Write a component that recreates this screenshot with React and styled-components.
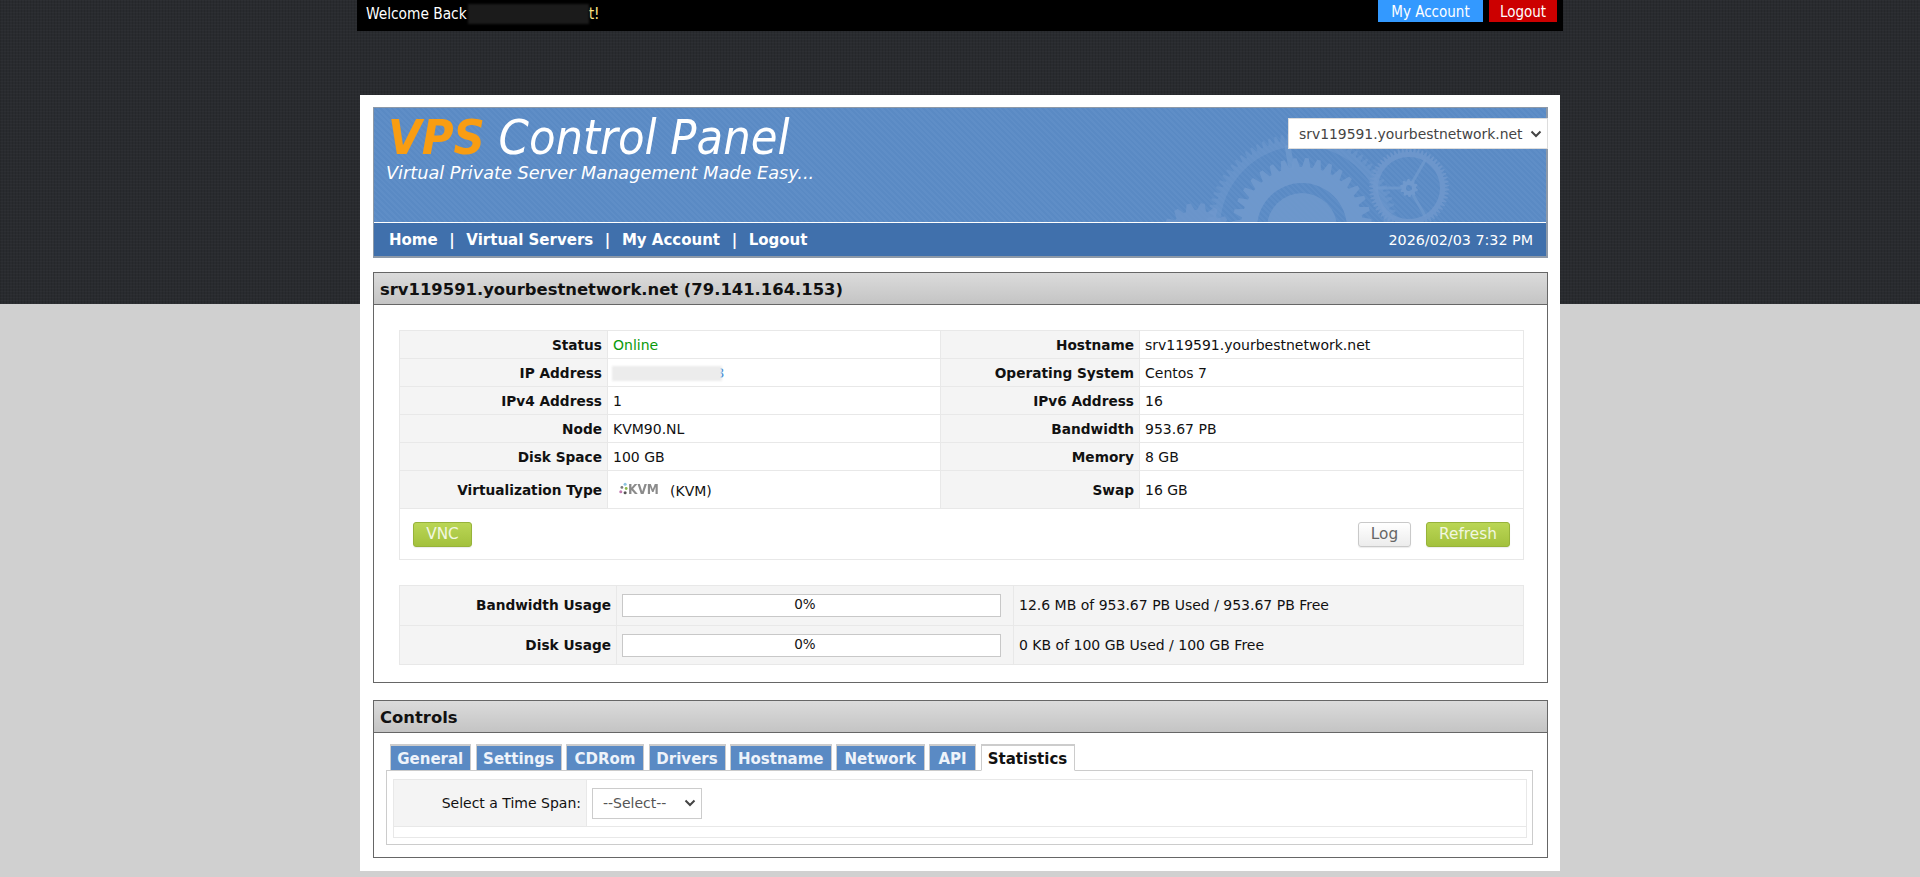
import React from 'react'
import styled, { createGlobalStyle } from 'styled-components'

const FONT = '"DejaVu Sans", "Noto Sans", sans-serif'
const NARROW = '"DejaVu Sans Condensed", "DejaVu Sans", sans-serif'

const chevron = `url("data:image/svg+xml,%3Csvg xmlns='http://www.w3.org/2000/svg' width='12' height='8' viewBox='0 0 12 8'%3E%3Cpath d='M1.5 1.5 6 6l4.5-4.5' fill='none' stroke='%23444' stroke-width='2'/%3E%3C/svg%3E")`

const GlobalStyle = createGlobalStyle`
  html, body { margin: 0; padding: 0; }
  body {
    min-height: 877px;
    overflow: hidden;
    font-family: ${FONT};
    font-size: 14px;
    color: #111;
    background:
      repeating-linear-gradient(0deg, rgba(255,255,255,.018) 0 1px, transparent 1px 3px) 0 0 / 100% 304px no-repeat,
      repeating-linear-gradient(90deg, rgba(0,0,0,.10) 0 1px, transparent 1px 3px) 0 0 / 100% 304px no-repeat,
      linear-gradient(#292b2f, #292b2f) 0 0 / 100% 304px no-repeat,
      #d0d0d0;
  }
`

const Page = styled.div`
  width: 1206px;
  margin: 0 auto;
`

const TopBar = styled.div`
  height: 31px;
  background: #000;
  display: flex;
  justify-content: space-between;
  padding: 0 6px 0 9px;
  box-sizing: border-box;
`

const Welcome = styled.div`
  color: #fff;
  font-family: ${NARROW};
  font-size: 15.3px;
  display: flex;
  align-items: center;
  height: 27px;
  white-space: pre;
  span { color: #ffe98a; }
`

const NameBlur = styled.i`
  display: inline-block;
  width: 121px;
  height: 20px;
  margin-left: 1px;
  background: #1b1b1b;
  filter: blur(1px);
`

const TopButtons = styled.div`
  display: flex;
  gap: 6px;
`

const TopButton = styled.a`
  height: 22px;
  line-height: 24px;
  width: ${p => p.$w}px;
  text-align: center;
  color: #fff;
  font-family: ${NARROW};
  font-size: 15px;
  background: ${p => p.$bg};
`

const Sheet = styled.div`
  width: 1200px;
  height: 776px;
  margin: 64px auto 0;
  padding: 12px 12px 0 13px;
  box-sizing: border-box;
  background: #fff;
`

const Banner = styled.div`
  position: relative;
  height: 151px;
  box-sizing: border-box;
  border: 2px solid #8d99a8;
  border-width: 1px 2px 2px 1px;
  display: flex;
  flex-direction: column;
  background:
    repeating-linear-gradient(45deg, #5a8ac4 0 2px, #5f8ec7 2px 4px);
`

const Hero = styled.div`
  position: relative;
  height: 115px;
  box-sizing: border-box;
  padding: 0 0 0 12px;
  border-bottom: 1px solid #fff;
  overflow: hidden;
`

const Gears = styled.svg`
  position: absolute;
  left: 0;
  top: 0;
  width: 100%;
  height: 100%;
`

const Logo = styled.div`
  position: relative;
  font-style: italic;
  font-size: 48.3px;
  line-height: 52px;
  margin: 3px 0 0 2px;
  color: #fff;
  font-family: ${NARROW};
  b { color: #f99d12; font-weight: 700; }
`

const Tagline = styled.div`
  position: relative;
  color: #fff;
  font-style: italic;
  font-size: 17.7px;
  line-height: 24px;
  margin-top: -2px;
`

const ServerSelect = styled.select`
  position: absolute;
  right: -2px;
  top: 10px;
  width: 260px;
  height: 31px;
  padding-left: 10px;
  appearance: none;
  background: #fff ${chevron} no-repeat right 5px center;
  border: 1px solid #ddd;
  border-radius: 0;
  color: #444;
  font-family: ${FONT};
  font-size: 13.9px;
`

const NavBar = styled.div`
  flex: 1;
  display: flex;
  align-items: center;
  justify-content: space-between;
  padding: 0 13px 0 15px;
  background: #4070ac;
  color: #fff;
`

const NavLinks = styled.nav`
  display: flex;
  font-weight: 700;
  font-size: 15px;
`

const NavSep = styled.span`
  margin: 0 11.6px;
`

const Clock = styled.div`
  font-size: 14.3px;
`

const Panel = styled.section`
  margin-top: ${p => p.$top}px;
  border: 1px solid #666;
`

const PanelTitle = styled.h2`
  margin: 0;
  height: 32px;
  box-sizing: border-box;
  padding-left: 6px;
  font-size: 16.4px;
  line-height: 33px;
  font-weight: 700;
  color: #111;
  border-bottom: 1px solid #666;
  background: linear-gradient(#dbdbdb, #c4c4c4);
`

const PanelBody = styled.div`
  padding: ${p => p.$pad};
`

const Grid = styled.table`
  width: ${p => p.$w}px;
  margin-top: ${p => p.$top || 0}px;
  table-layout: fixed;
  border-collapse: collapse;
  td {
    border: 1px solid #e8e8e8;
    padding: 0;
    height: ${p => p.$row - 1}px;
  }
`

const Label = styled.td`
  background: #f4f4f4;
  text-align: right;
  font-size: ${p => (p.$plain ? 14 : 13.7)}px;
  font-weight: ${p => (p.$plain ? 400 : 700)};
  padding-right: 5px !important;
`

const TallLabel = styled(Label)`
  height: 37px !important;
`

const Value = styled.td`
  padding-left: 5px !important;
  color: ${p => p.$color || '#111'};
  background: ${p => p.$bg || '#fff'};
`

const Gap = styled.td`
  height: ${p => p.$h}px !important;
`

const IpLink = styled.span`
  position: relative;
  display: inline-block;
  color: #0b5cc4;
`

const IpBlur = styled.i`
  position: absolute;
  left: -1px;
  top: 1px;
  width: calc(100% - 1px);
  height: 15px;
  background: #ececec;
  filter: blur(1px);
`

const KvmLogo = styled.span`
  display: inline-flex;
  align-items: center;
  margin-left: 5px;
  margin-right: 6px;
  width: 46px;
  color: #8b8b8b;
  font-family: ${NARROW};
  font-weight: 700;
  font-size: 13.5px;
  filter: blur(.4px);
  svg { margin-right: -1px; }
`

const Actions = styled.div`
  display: flex;
  align-items: center;
  padding: 0 13px;
  gap: 15px;
`

const Spacer = styled.div`
  flex: 1;
`

const Btn = styled.button`
  width: ${p => p.$w}px;
  height: 25px;
  padding: 0;
  border-radius: 3px;
  font-family: ${FONT};
  font-size: 15.3px;
  border: 1px solid ${p => (p.$light ? '#c9c9c9' : '#97b33a')};
  color: ${p => (p.$light ? '#666' : '#f2f7e0')};
  background: ${p => (p.$light ? 'linear-gradient(#fff, #ececec)' : 'linear-gradient(#bad655, #a3c13d)')};
  box-shadow: 0 1px 1px rgba(0,0,0,.08);
`

const Bar = styled.div`
  width: 379px;
  height: 23px;
  box-sizing: border-box;
  padding-right: 13px;
  border: 1px solid #c8c8c8;
  background: #fff;
  text-align: center;
  font-size: 13.5px;
  line-height: 19px;
  margin-top: 1px;
`

const Tabs = styled.div`
  display: flex;
  gap: 4.5px;
  padding-left: 3.5px;
  position: relative;
  z-index: 1;
  margin-bottom: -1px;
`

const Tab = styled.div`
  width: ${p => p.$w}px;
  box-sizing: border-box;
  text-align: center;
  font-weight: 700;
  font-size: 15px;
  line-height: 27px;
  border: 1px solid #ccc;
  border-top-width: 2px;
  border-bottom: ${p => (p.$active ? '1px solid #fff' : '0')};
  color: ${p => (p.$active ? '#111' : '#eef3fa')};
  background: ${p => (p.$active ? '#fff' : '#5a8ac4')};
  height: ${p => (p.$active ? 27 : 26)}px;
`

const TabPanel = styled.div`
  border: 1px solid #ccc;
  padding: 8px 6px 6px 6px;
`

const TimeSelect = styled.select`
  width: 110px;
  height: 31px;
  padding-left: 10px;
  display: block;
  appearance: none;
  background: #fff ${chevron} no-repeat right 5px center;
  border: 1px solid #ccc;
  border-radius: 0;
  color: #555;
  font-family: ${FONT};
  font-size: 14px;
`

const toothPath = (cx, cy, r, depth, teeth) => {
  const pts = []
  const step = (Math.PI * 2) / teeth
  for (let i = 0; i < teeth; i++) {
    const a = i * step
    const rows = [[0, r - depth], [0.25, r], [0.55, r], [0.8, r - depth]]
    rows.forEach(([f, rad]) => {
      const t = a + f * step
      pts.push(`${(cx + Math.cos(t) * rad).toFixed(1)} ${(cy + Math.sin(t) * rad).toFixed(1)}`)
    })
  }
  return `M${pts.join('L')}Z`
}

const ring = (cx, cy, r) =>
  `M${cx - r} ${cy}a${r} ${r} 0 1 0 ${r * 2} 0a${r} ${r} 0 1 0 ${-r * 2} 0Z`

const GEAR = '#7099cd'

const Spoke = ({ cx, cy, from, to, deg, width }) => {
  const t = (deg * Math.PI) / 180
  return (
    <line
      x1={cx + Math.cos(t) * from}
      y1={cy + Math.sin(t) * from}
      x2={cx + Math.cos(t) * to}
      y2={cy + Math.sin(t) * to}
      stroke={GEAR}
      strokeOpacity=".75"
      strokeWidth={width}
    />
  )
}

// gears are placed relative to the banner's top left corner (374,108)
function GearArt() {
  return (
    <Gears viewBox="0 0 1172 114" preserveAspectRatio="none">
      <path d={toothPath(928, 120, 95, 6, 90) + ring(928, 120, 82)} fill={GEAR} fillOpacity=".55" fillRule="evenodd" />
      <Spoke cx={928} cy={120} from={60} to={84} deg={-100} width={6} />
      <path d={toothPath(928, 120, 70, 9, 36) + ring(928, 120, 45)} fill={GEAR} fillOpacity=".9" fillRule="evenodd" />
      <path d={ring(928, 120, 35)} fill={GEAR} fillOpacity=".85" />
      <path d={toothPath(823, 131, 36, 7, 16) + ring(823, 131, 12)} fill={GEAR} fillOpacity=".7" fillRule="evenodd" />
      <path d={toothPath(1035, 80, 40, 4, 60) + ring(1035, 80, 31)} fill={GEAR} fillOpacity=".8" fillRule="evenodd" />
      <Spoke cx={1035} cy={80} from={3} to={33} deg={-60} width={3} />
      <Spoke cx={1035} cy={80} from={3} to={33} deg={60} width={3} />
      <Spoke cx={1035} cy={80} from={3} to={33} deg={180} width={3} />
      <path d={toothPath(1035, 80, 9, 2, 10) + ring(1035, 80, 3)} fill={GEAR} fillRule="evenodd" />
    </Gears>
  )
}

const infoRows = [
  ['Status', 'Online', 'Hostname', 'srv119591.yourbestnetwork.net'],
  ['IP Address', null, 'Operating System', 'Centos 7'],
  ['IPv4 Address', '1', 'IPv6 Address', '16'],
  ['Node', 'KVM90.NL', 'Bandwidth', '953.67 PB'],
  ['Disk Space', '100 GB', 'Memory', '8 GB'],
]

const tabs = [
  ['General', 81.5], ['Settings', 86], ['CDRom', 78], ['Drivers', 77],
  ['Hostname', 101.5], ['Network', 88.5], ['API', 47],
]

export default function App() {
  return (
    <Page>
      <GlobalStyle />
      <TopBar>
        <Welcome>Welcome Back<NameBlur /><span>t!</span></Welcome>
        <TopButtons>
          <TopButton $w={105} $bg="#3399ff">My Account</TopButton>
          <TopButton $w={68} $bg="#cc0000">Logout</TopButton>
        </TopButtons>
      </TopBar>

      <Sheet>
        <Banner>
          <Hero>
            <GearArt />
            <Logo><b>VPS</b> Control Panel</Logo>
            <Tagline>Virtual Private Server Management Made Easy...</Tagline>
          </Hero>
          <ServerSelect defaultValue="srv">
            <option value="srv">srv119591.yourbestnetwork.net</option>
          </ServerSelect>
          <NavBar>
            <NavLinks>
              Home<NavSep>|</NavSep>Virtual Servers<NavSep>|</NavSep>My Account<NavSep>|</NavSep>Logout
            </NavLinks>
            <Clock>2026/02/03 7:32 PM</Clock>
          </NavBar>
        </Banner>

        <Panel $top={14}>
          <PanelTitle>srv119591.yourbestnetwork.net (79.141.164.153)</PanelTitle>
          <PanelBody $pad="25px 24px 17px 25px">
            <Grid $w={1124} $row={28}>
              <colgroup>
                <col width="208" /><col width="333" /><col width="199" /><col width="384" />
              </colgroup>
              <tbody>
                {infoRows.map(row => (
                  <tr key={row[0]}>
                    <Label>{row[0]}</Label>
                    <Value $color={row[1] === 'Online' ? '#0a9a0a' : undefined}>
                      {row[1] ?? <IpLink>79.141.164.153<IpBlur /></IpLink>}
                    </Value>
                    <Label>{row[2]}</Label>
                    <Value>{row[3]}</Value>
                  </tr>
                ))}
                <tr>
                  <TallLabel>Virtualization Type</TallLabel>
                  <Value>
                    <KvmLogo>
                      <svg width="11" height="13" viewBox="0 0 9 12">
                        <circle cx="6" cy="2" r="1.4" fill="#8cc4e0" />
                        <circle cx="3" cy="5" r="1.3" fill="#7a7a7a" />
                        <circle cx="7" cy="6" r="1.3" fill="#88b848" />
                        <circle cx="2" cy="9" r="1.4" fill="#c27ab0" />
                        <circle cx="6" cy="10" r="1.4" fill="#555" />
                      </svg>
                      KVM
                    </KvmLogo>
                    (KVM)
                  </Value>
                  <Label>Swap</Label>
                  <Value>16 GB</Value>
                </tr>
                <tr>
                  <Gap colSpan={4} $h={50}>
                    <Actions>
                      <Btn $w={59}>VNC</Btn>
                      <Spacer />
                      <Btn $w={53} $light>Log</Btn>
                      <Btn $w={84}>Refresh</Btn>
                    </Actions>
                  </Gap>
                </tr>
              </tbody>
            </Grid>

            <Grid $w={1124} $row={39.5} $top={25}>
              <colgroup>
                <col width="217" /><col width="397" /><col width="510" />
              </colgroup>
              <tbody>
                <tr>
                  <Label>Bandwidth Usage</Label>
                  <Value $bg="#f4f4f4"><Bar>0%</Bar></Value>
                  <Value $bg="#f4f4f4">12.6 MB of 953.67 PB Used / 953.67 PB Free</Value>
                </tr>
                <tr>
                  <Label>Disk Usage</Label>
                  <Value $bg="#f4f4f4"><Bar>0%</Bar></Value>
                  <Value $bg="#f4f4f4">0 KB of 100 GB Used / 100 GB Free</Value>
                </tr>
              </tbody>
            </Grid>
          </PanelBody>
        </Panel>

        <Panel $top={17}>
          <PanelTitle>Controls</PanelTitle>
          <PanelBody $pad="11px 14px 12px 12px">
            <Tabs>
              {tabs.map(([name, w]) => <Tab key={name} $w={w}>{name}</Tab>)}
              <Tab $w={94} $active>Statistics</Tab>
            </Tabs>
            <TabPanel>
              <Grid $w={1133} $row={47}>
                <colgroup>
                  <col width="193" /><col width="940" />
                </colgroup>
                <tbody>
                  <tr>
                    <Label $plain>Select a Time Span:</Label>
                    <Value>
                      <TimeSelect defaultValue="">
                        <option value="">--Select--</option>
                      </TimeSelect>
                    </Value>
                  </tr>
                  <tr>
                    <Gap colSpan={2} $h={10} />
                  </tr>
                </tbody>
              </Grid>
            </TabPanel>
          </PanelBody>
        </Panel>
      </Sheet>
    </Page>
  )
}
